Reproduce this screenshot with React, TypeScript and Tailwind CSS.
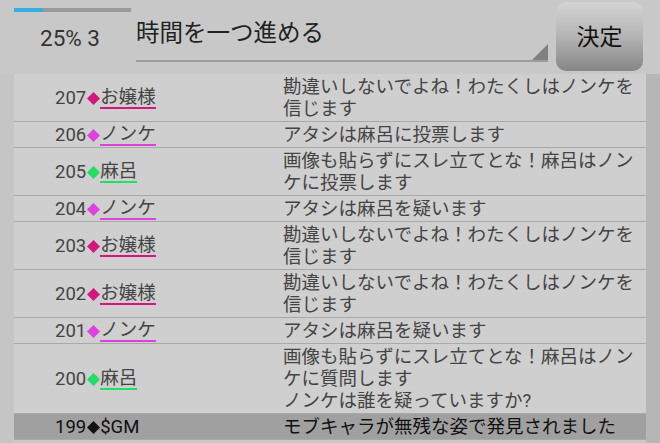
import React from "react";

type Speaker = "ojou" | "nonke" | "maro" | "gm";

interface LogRow {
  no: number;
  who: Speaker;
  text: string;
}

const NAMES: Record<Speaker, string> = {
  ojou: "お嬢様",
  nonke: "ノンケ",
  maro: "麻呂",
  gm: "$GM",
};

// diamond + underline colour per speaker
const COLORS: Record<Speaker, string> = {
  ojou: "#d3177f",
  nonke: "#de42de",
  maro: "#22dd66",
  gm: "#111111",
};

const rows: LogRow[] = [
  { no: 207, who: "ojou", text: "勘違いしないでよね！わたくしはノンケを信じます" },
  { no: 206, who: "nonke", text: "アタシは麻呂に投票します" },
  { no: 205, who: "maro", text: "画像も貼らずにスレ立てとな！麻呂はノンケに投票します" },
  { no: 204, who: "nonke", text: "アタシは麻呂を疑います" },
  { no: 203, who: "ojou", text: "勘違いしないでよね！わたくしはノンケを信じます" },
  { no: 202, who: "ojou", text: "勘違いしないでよね！わたくしはノンケを信じます" },
  { no: 201, who: "nonke", text: "アタシは麻呂を疑います" },
  {
    no: 200,
    who: "maro",
    text: "画像も貼らずにスレ立てとな！麻呂はノンケに質問します\nノンケは誰を疑っていますか?",
  },
  { no: 199, who: "gm", text: "モブキャラが無残な姿で発見されました" },
];

const Diamond: React.FC<{ color: string }> = ({ color }) => (
  <svg width="13" height="13" viewBox="0 0 13 13" className="mx-[0.5px]">
    <polygon points="6.5,0 13,6.5 6.5,13 0,6.5" fill={color} />
  </svg>
);

const Row: React.FC<LogRow> = ({ no, who, text }) => {
  const isGm = who === "gm";
  const color = COLORS[who];
  return (
    <div
      className={`flex flex-row border-b border-[#a9a9a9] pt-[2px] pb-[1px] ${
        isGm ? "bg-[#a0a0a0] text-[#111]" : "bg-[#cfcfcf] text-[#444]"
      }`}
    >
      <div className="flex w-[269px] shrink-0 items-center pl-[41px]">
        <span className="leading-[22px]">{no}</span>
        <Diamond color={color} />
        {isGm ? (
          <span className="leading-[22px]">{NAMES[who]}</span>
        ) : (
          <span
            className="border-b-2 leading-[20px]"
            style={{ borderColor: color }}
          >
            {NAMES[who]}
          </span>
        )}
      </div>
      <div className="flex-1 whitespace-pre-line pr-[6px] leading-[22px]">{text}</div>
    </div>
  );
};

export default function App() {
  return (
    <div className="flex h-[443px] w-[660px] flex-col overflow-hidden bg-[#c8c8c8] font-[Roboto,'Noto_Sans_CJK_JP',sans-serif] text-[18.5px]">
      {/* header */}
      <div className="flex h-[74px] shrink-0 flex-row pl-[14px]">
        <div className="flex w-[117px] shrink-0 flex-col pt-[8px]">
          <div className="flex h-[4px] w-full bg-[#9a9a9a]">
            <div className="h-full w-[29px] bg-[#35aee2]" />
          </div>
          <div className="mt-[13px] pl-[26px] text-[22.5px] leading-[26px] text-[#333]">25% 3</div>
        </div>
        <div className="ml-[5px] flex w-[412px] shrink-0 flex-col pt-[18px]">
          <div className="relative flex h-[44px] items-start border-b-2 border-[#9c9c9c] text-[23.5px] leading-[30px] text-[#222]">
            時間を一つ進める
            <svg
              width="16"
              height="16"
              viewBox="0 0 16 16"
              className="absolute right-0 bottom-0"
            >
              <polygon points="16,0 16,16 0,16" fill="#808080" />
            </svg>
          </div>
        </div>
        <div className="ml-[8px] mt-[2px] flex h-[69px] w-[87px] items-center justify-center rounded-[10px] bg-gradient-to-b from-[#d4d4d4] via-[#b4b4b4] to-[#868686] pt-[4px] text-[23px] text-[#111]">
          決定
        </div>
      </div>

      {/* log list */}
      <div className="flex flex-1 flex-row overflow-hidden">
        <div className="w-[14px] shrink-0 bg-[#c5c5c5]" />
        <div className="flex flex-1 flex-col">
          {rows.map((r) => (
            <Row key={r.no} {...r} />
          ))}
        </div>
        <div className="w-[14px] shrink-0 bg-[#b6b6b6]" />
      </div>
    </div>
  );
}
